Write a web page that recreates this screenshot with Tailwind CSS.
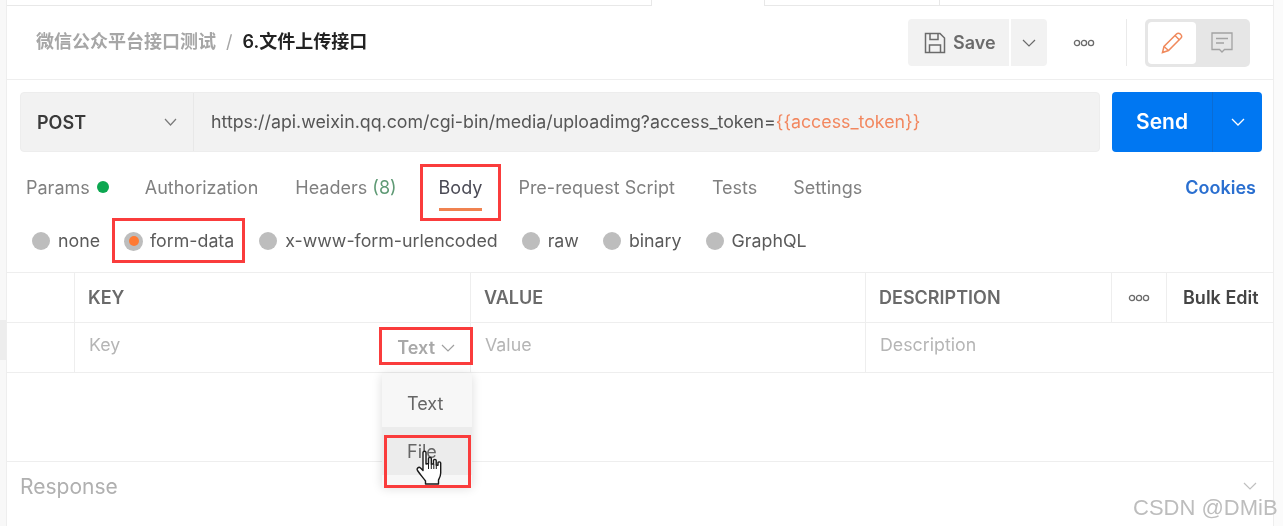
<!DOCTYPE html>
<html>
<head>
<meta charset="utf-8">
<script src="https://cdn.jsdelivr.net/npm/@tailwindcss/browser@4"></script>
</head>
<body class="bg-white overflow-hidden">
<div class="relative w-[1283px] h-[526px] overflow-hidden flex bg-white text-[#6b6b6b] font-['Inter','Noto_Sans_CJK_SC',sans-serif] text-[17.8px] [filter:blur(0.35px)]">
  <!-- left rail -->
  <div class="w-[7px] shrink-0 bg-[#f8f8f8] border-r border-[#eeeeee] pt-[320px]">
    <div class="h-[40px] bg-[#ededed]"></div>
  </div>
  <!-- main -->
  <div class="w-[1267px] shrink-0 flex flex-col border-r border-[#eeeeee]">
    <!-- top tab strip -->
    <div class="h-[6px] flex shrink-0">
      <div class="w-[645px] border-b border-r border-[#e8e8e8]"></div>
      <div class="w-[112px]"></div>
      <div class="w-[176px] border-l border-b border-r border-[#e8e8e8]"></div>
      <div class="flex-1 border-b border-[#e8e8e8]"></div>
    </div>
    <!-- title row -->
    <div class="h-[74px] shrink-0 flex items-center border-b border-[#eeeeee] pl-[29px] pr-[23px]">
      <div class="flex items-center mb-[2px]">
        <span class="text-[#a6a6a6] font-semibold text-[18px]">微信公众平台接口测试</span>
        <span class="text-[#a6a6a6] ml-[10px] text-[18px]">/</span>
        <span class="text-[#222222] font-semibold text-[18px] ml-[10px]">6.文件上传接口</span>
      </div>
      <div class="ml-auto flex items-center">
        <div class="h-[47px] w-[101px] rounded-l-[4px] bg-[#f2f2f2] flex items-center pl-[16px] gap-[7px]">
          <svg width="22" height="22" viewBox="0 0 22 22" fill="none" stroke="#6b6b6b" stroke-width="1.5"><path d="M1.5 1.5H16L20.5 6V20.5H1.5Z"/><path d="M6 1.5V7.5H14V1.5M5.5 20.5V13H16.5V20.5"/></svg>
          <span class="font-semibold text-[#6b6b6b] text-[18px]">Save</span>
        </div>
        <div class="ml-[2px] h-[47px] w-[36px] rounded-r-[4px] bg-[#f2f2f2] flex items-center justify-center">
          <svg width="14" height="8" viewBox="0 0 14 8" fill="none" stroke="#6b6b6b" stroke-width="1.2"><path d="M1 1L7 7L13 1"/></svg>
        </div>
        <div class="w-[79px] flex justify-start pl-[26px]">
          <svg width="22" height="8" viewBox="0 0 22 8" fill="none" stroke="#6b6b6b" stroke-width="1.3"><circle cx="4" cy="4" r="2.6"/><circle cx="11" cy="4" r="2.6"/><circle cx="18" cy="4" r="2.6"/></svg>
        </div>
        <div class="w-px h-[47px] bg-[#eaeaea]"></div>
        <div class="ml-[18px] h-[48px] w-[105px] rounded-[5px] bg-[#e6e6e6] flex items-center p-[3px]">
          <div class="h-[42px] w-[48px] rounded-[4px] bg-white flex items-center justify-center">
            <svg width="24" height="24" viewBox="0 0 24 24" fill="none" stroke="#f08a5d" stroke-width="1.5"><path d="M2.5 21.5L4 15.5L16.5 3C17.5 2 19 2 20.5 3.2C22 4.5 22 6 21 7L8.5 19.5Z"/><path d="M15 4.5L19.5 9M4 15.5L8.5 19.5"/></svg>
          </div>
          <div class="flex-1 flex items-center justify-center">
            <svg width="22" height="22" viewBox="0 0 22 22" fill="none" stroke="#a3a3a3" stroke-width="1.3"><path d="M1 1H21V17.5H13.5L11 20L8.5 17.5H1Z"/><path d="M5 6.5H17M5 11H13"/></svg>
          </div>
        </div>
      </div>
    </div>
    <!-- url row -->
    <div class="mt-[12px] ml-[13px] mr-[11px] h-[60px] shrink-0 flex">
      <div class="w-[1080px] h-full flex rounded-[4px] bg-[#f2f2f2] border border-[#ededed]">
        <div class="w-[173px] flex items-center justify-between pl-[16px] pr-[16px] border-r border-[#e8e8e8]">
          <span class="font-semibold text-[#3a3a3a] text-[18px] mt-[1px]">POST</span>
          <svg width="13" height="8" viewBox="0 0 13 8" fill="none" stroke="#7a7a7a" stroke-width="1.2"><path d="M1 1L6.5 7L12 1"/></svg>
        </div>
        <div class="flex items-center pl-[17px] text-[17.8px] text-[#555555]">https://api.weixin.qq.com/cgi-bin/media/uploadimg?access_token=<span class="text-[#f2875f]">{{access_token}}</span></div>
      </div>
      <div class="ml-[12px] w-[150px] h-full rounded-[4px] bg-[#0077f2] flex text-white">
        <div class="w-[101px] flex items-center justify-center font-semibold text-[21px] border-r border-[#0a6cd4]">Send</div>
        <div class="flex-1 flex items-center justify-center">
          <svg width="14" height="8" viewBox="0 0 14 8" fill="none" stroke="#ffffff" stroke-width="1.3"><path d="M1 1L7 7L13 1"/></svg>
        </div>
      </div>
    </div>
    <!-- tabs -->
    <div class="h-[46px] mt-[12px] pl-[19px] pr-[17px] flex items-center shrink-0 text-[#808080] text-[18px]">
      <span>Params</span>
      <span class="ml-[7px] w-[12px] h-[12px] rounded-full bg-[#0ca750]"></span>
      <span class="ml-[36px]">Authorization</span>
      <span class="ml-[37px]">Headers <span class="text-[#5f9a75]">(8)</span></span>
      <div class="ml-[42px] relative text-[#4a4a55]">Body
        <div class="absolute left-0 right-0 top-[34px] h-[3px] bg-[#f08250]"></div>
      </div>
      <span class="ml-[36px]">Pre-request Script</span>
      <span class="ml-[37px]">Tests</span>
      <span class="ml-[36px]">Settings</span>
      <span class="ml-auto font-semibold text-[#2a6fd0]">Cookies</span>
    </div>
    <!-- body types -->
    <div class="h-[38px] mt-[12px] pl-[25px] flex items-center shrink-0 text-[#5a5a5a]">
      <span class="w-[18px] h-[18px] rounded-full bg-[#bdbdbd]"></span>
      <span class="ml-[8px]">none</span>
      <span class="ml-[24px] w-[19px] h-[19px] rounded-full bg-[#bdbdbd] flex items-center justify-center"><span class="w-[10px] h-[10px] rounded-full bg-[#ff7a33]"></span></span>
      <span class="ml-[7px]">form-data</span>
      <span class="ml-[25px] w-[18px] h-[18px] rounded-full bg-[#bdbdbd]"></span>
      <span class="ml-[8px]">x-www-form-urlencoded</span>
      <span class="ml-[24px] w-[18px] h-[18px] rounded-full bg-[#bdbdbd]"></span>
      <span class="ml-[8px]">raw</span>
      <span class="ml-[24px] w-[18px] h-[18px] rounded-full bg-[#bdbdbd]"></span>
      <span class="ml-[8px]">binary</span>
      <span class="ml-[24px] w-[18px] h-[18px] rounded-full bg-[#bdbdbd]"></span>
      <span class="ml-[8px]">GraphQL</span>
    </div>
    <!-- table -->
    <div class="mt-[12px] shrink-0 border-t border-[#eeeeee]">
      <div class="h-[50px] flex border-b border-[#eeeeee] font-semibold text-[#6a6a6a] text-[18px]">
        <div class="w-[68px] border-r border-[#eeeeee]"></div>
        <div class="w-[396px] border-r border-[#eeeeee] pl-[13px] flex items-center">KEY</div>
        <div class="w-[395px] border-r border-[#eeeeee] pl-[13px] flex items-center">VALUE</div>
        <div class="w-[246px] border-r border-[#eeeeee] pl-[13px] flex items-center">DESCRIPTION</div>
        <div class="w-[55px] border-r border-[#eeeeee] flex items-center justify-start pl-[16px]">
          <svg width="22" height="8" viewBox="0 0 22 8" fill="none" stroke="#6b6b6b" stroke-width="1.3"><circle cx="4" cy="4" r="2.6"/><circle cx="11" cy="4" r="2.6"/><circle cx="18" cy="4" r="2.6"/></svg>
        </div>
        <div class="flex-1 pl-[16px] flex items-center text-[#444444] whitespace-nowrap">Bulk Edit</div>
      </div>
      <div class="h-[50px] flex border-b border-[#eeeeee] text-[#b5b5b5]">
        <div class="w-[68px] border-r border-[#eeeeee]"></div>
        <div class="w-[396px] border-r border-[#eeeeee] pl-[14px] pr-[15px] flex items-center justify-between">
          <span class="mb-[4px]">Key</span>
          <span class="flex items-center gap-[6px] font-semibold text-[#a8a8a8] text-[18px]">Text
            <svg width="14" height="8" viewBox="0 0 14 8" fill="none" stroke="#a0a0a0" stroke-width="1.2"><path d="M1 1L7 7L13 1"/></svg>
          </span>
        </div>
        <div class="w-[395px] border-r border-[#eeeeee] pl-[14px] flex items-center"><span class="mb-[4px]">Value</span></div>
        <div class="flex-1 pl-[14px] flex items-center"><span class="mb-[4px]">Description</span></div>
      </div>
    </div>
    <div class="h-[89px] shrink-0 border-b border-[#eeeeee]"></div>
    <div class="flex-1 flex items-start justify-between pl-[13px] pr-[16px] pt-[9px] text-[#b0b0b0] text-[21px]">
      <span>Response</span>
      <svg class="mt-[11px]" width="14" height="8" viewBox="0 0 14 8" fill="none" stroke="#c0c0c0" stroke-width="1.2"><path d="M1 1L7 7L13 1"/></svg>
    </div>
  </div>
  <div class="flex-1 bg-[#fbfbfb]"></div>

  <!-- dropdown -->
  <div class="absolute left-[382px] top-[373px] w-[90px] h-[113px] bg-[#f7f7f7] shadow-[0_2px_10px_rgba(0,0,0,0.14)] flex flex-col text-[#666666] text-[18px]">
    <div class="h-[54px] pl-[25px] pt-[19px] leading-[24px]">Text</div>
    <div class="h-[48px] bg-[#ececec] pl-[25px] pt-[13px] leading-[24px]">File</div>
    <div class="h-[11px]"></div>
  </div>
  <!-- hand cursor -->
  <svg class="absolute left-[416px] top-[450px]" width="27" height="36" viewBox="0 0 27 36" fill="#ffffff" stroke="#1a1a1a" stroke-width="1.4" stroke-linejoin="round"><path d="M7 2.5C7 0.8 10 0.8 10 2.5V14L12.5 13.5V8.5C12.5 7 15.3 7 15.3 8.5V14L17.5 14V10.5C17.5 9 20.2 9 20.2 10.5V15L22 15.2V12.8C22 11.5 24.7 11.5 24.7 13V23C24.7 26 23.5 28 22.5 30V34H9.5V31C7.5 28 4.5 25 1.5 20.5C0.3 18.5 2.7 16.3 4.5 18L7 20.5Z"/><path d="M12.5 14V19M15.3 14V19M17.8 14V19M20.3 15V19" fill="none" stroke-width="1"/></svg>
  <!-- red highlight boxes -->
  <div class="absolute left-[420px] top-[164px] w-[81px] h-[57px] border-[3px] border-[#fa3c3c]"></div>
  <div class="absolute left-[112px] top-[218px] w-[133px] h-[45px] border-[3px] border-[#fa3c3c]"></div>
  <div class="absolute left-[379px] top-[327px] w-[94px] h-[38px] border-[3px] border-[#fa3c3c]"></div>
  <div class="absolute left-[384px] top-[435px] w-[87px] h-[53px] border-[3px] border-[#fa3c3c]"></div>
  <!-- watermark -->
  <div class="absolute left-[1133px] top-[491px] text-[#bdbdbd] text-[22px] font-['Liberation_Sans',sans-serif] whitespace-nowrap">CSDN @DMiB</div>
</div>
</body>
</html>
